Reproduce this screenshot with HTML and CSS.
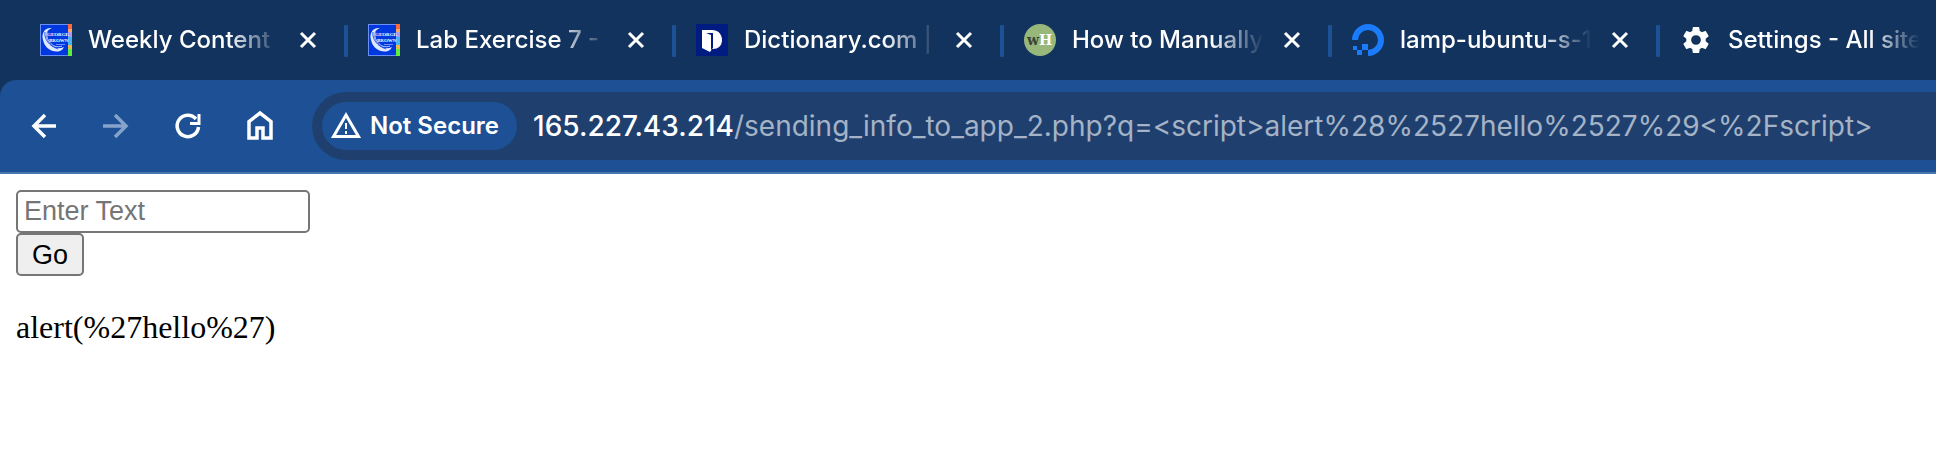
FILE: index.html
```html
<!DOCTYPE html>
<html lang="en">
<head>
<meta charset="utf-8">
<title>165.227.43.214/sending_info_to_app_2.php</title>
<link rel="stylesheet" href="styles.css">
</head>
<body>
<svg class="defs" aria-hidden="true">
  <symbol id="close" viewBox="0 0 32 32"><path d="M9 9 23 23M23 9 9 23" fill="none" stroke="#fff" stroke-width="3"/></symbol>
  <symbol id="college" viewBox="0 0 32 32">
    <rect width="32" height="32" fill="#6a8ff5"/><rect x="1" y="1" width="27" height="30" fill="#0038e0"/>
    <rect x="28" width="4" height="5" fill="#ff6a3c"/><rect x="28" y="5" width="4" height="3" fill="#ffa568"/><rect x="28" y="8" width="4" height="5" fill="#a99af0"/><rect x="28" y="13" width="4" height="8" fill="#42b4f5"/><rect x="28" y="21" width="4" height="4" fill="#f0b840"/><rect x="28" y="25" width="4" height="7" fill="#62ee3c"/>
    <path d="M12 4C5 3 1 9 3 16c2 9 10 13 17 11 2-1 3-2 4-4-7 3-13 0-16-6C5 12 6 6 12 4Z" fill="#dfe8ff"/>
    <path d="M5 8c-1 7 4 14 13 17" fill="none" stroke="#0038e0" stroke-width=".8"/>
    <path d="M7 8c-1 6 2 11 7 14 3 1 6 1 8 0" fill="none" stroke="#b9caff" stroke-width="1"/>
    <path d="M16 20.500h9" stroke="#6f8cfa"/>
  </symbol>
</svg>
<header>
  <nav class="tabs" aria-label="Open tabs">
    <div class="tab"><svg class="favicon" viewBox="0 0 32 32"><use href="#college"/><text x="7" y="12" class="college-name">GEORGE</text><text x="9" y="18" class="college-name">BROWN</text></svg><a class="title" href="#">Weekly Content</a><button class="close" aria-label="Close Weekly Content"><svg><use href="#close"/></svg></button></div>
    <div class="tab"><svg class="favicon" viewBox="0 0 32 32"><use href="#college"/><text x="7" y="12" class="college-name">GEORGE</text><text x="9" y="18" class="college-name">BROWN</text></svg><a class="title" href="#">Lab Exercise 7 -</a><button class="close" aria-label="Close Lab Exercise 7"><svg><use href="#close"/></svg></button></div>
    <div class="tab"><svg class="favicon" viewBox="0 0 32 32"><rect width="32" height="32" fill="#001c80"/><path d="M6 6h10c6 0 10 4 10 10s-4 9-9 9h-1l-2 3-8-4Z" fill="#fff"/><path d="M10 9h7v15l-2 2V11Z" fill="#001c80"/><path d="M10 9l3 2h1v16l-2-1V11Z" fill="#fff"/></svg><a class="title" href="#">Dictionary.com |</a><button class="close" aria-label="Close Dictionary.com"><svg><use href="#close"/></svg></button></div>
    <div class="tab"><svg class="favicon" viewBox="0 0 32 32"><circle cx="16" cy="16" r="16" fill="#97b77b"/><text x="3" y="21" class="wiki-w">w</text><text x="15" y="21" class="wiki-h">H</text></svg><a class="title" href="#">How to Manually</a><button class="close" aria-label="Close How to Manually"><svg><use href="#close"/></svg></button></div>
    <div class="tab"><svg class="favicon" viewBox="0 0 32 32"><path d="M3 16A13 13 0 1 1 16 29" fill="none" stroke="#1a7cfa" stroke-width="6"/><path d="M10 20h6v6h-6v5H5v-5H1v-4h4v4h5Z" fill="#1a7cfa"/></svg><a class="title" href="#">lamp-ubuntu-s-1</a><button class="close" aria-label="Close lamp-ubuntu"><svg><use href="#close"/></svg></button></div>
    <div class="tab"><svg class="favicon" viewBox="0 0 32 32"><path transform="translate(-.2 -.2) scale(1.35)" fill="#fff" d="M19.14 12.94c.04-.3.06-.61.06-.94 0-.32-.02-.64-.07-.94l2.03-1.58a.49.49 0 0 0 .12-.61l-1.92-3.32a.488.488 0 0 0-.59-.22l-2.39.96c-.5-.38-1.03-.7-1.62-.94l-.36-2.54a.484.484 0 0 0-.48-.41h-3.84c-.24 0-.43.17-.47.41l-.36 2.54c-.59.24-1.13.57-1.62.94l-2.39-.96c-.22-.08-.47 0-.59.22L2.74 8.87c-.12.21-.08.47.12.61l2.03 1.58c-.05.3-.09.63-.09.94s.02.64.07.94l-2.03 1.58a.49.49 0 0 0-.12.61l1.92 3.32c.12.22.37.29.59.22l2.39-.96c.5.38 1.03.7 1.62.94l.36 2.54c.05.24.24.41.48.41h3.84c.24 0 .44-.17.47-.41l.36-2.54c.59-.24 1.13-.56 1.62-.94l2.39.96c.22.08.47 0 .59-.22l1.92-3.32c.12-.22.07-.47-.12-.61l-2.01-1.58zM12 15.6A3.6 3.6 0 1 1 12 8.4a3.6 3.6 0 0 1 0 7.200z"/></svg><a class="title" href="#">Settings - All site</a><button class="close" aria-label="Close Settings"><svg><use href="#close"/></svg></button></div>
  </nav>
  <div class="toolbar">
    <div class="controls">
      <button aria-label="Back"><svg viewBox="0 0 32 32"><path d="M28 16H6M17 5 6 16 17 27" fill="none" stroke="#fff" stroke-width="3.5"/></svg></button>
      <button aria-label="Forward" disabled><svg viewBox="0 0 32 32"><path d="M3 16h22M15 5 26 16 15 27" fill="none" stroke="#86a3cb" stroke-width="3.5"/></svg></button>
      <button aria-label="Reload"><svg viewBox="0 0 32 32"><path d="M26.500 17A10.700 10.700 0 1 1 24 9" fill="none" stroke="#fff" stroke-width="3.500"/><path d="M25.500 4h3v11H18v-3h7.500Z" fill="#fff"/></svg></button>
      <button aria-label="Home"><svg viewBox="0 0 32 32"><path d="M5 28V11.500L16 3l11 8.500V28h-8V18h-6v10Z" fill="none" stroke="#fff" stroke-width="3.500"/></svg></button>
    </div>
    <div class="omnibox">
      <button class="security"><svg viewBox="0 0 32 32"><path d="M3.500 26.500 16 5 28.500 26.500Z" fill="none" stroke="#fff" stroke-width="3"/><path d="M16 13v6M16 21v3" stroke="#fff" stroke-width="2"/></svg>Not Secure</button>
      <div class="url" role="textbox" aria-label="Address" contenteditable="true" spellcheck="false"><span class="host">165.227.43.214</span>/sending_info_to_app_2.php?q=&lt;script&gt;alert%28%2527hello%2527%29&lt;%2Fscript&gt;</div>
    </div>
  </div>
</header>
<main>
  <form>
    <input type="text" name="q" placeholder="Enter Text" aria-label="Enter Text">
    <button type="button">Go</button>
  </form>
  <p>alert(%27hello%27)</p>
</main>
</body>
</html>
```

FILE: styles.css
```css
* { box-sizing: border-box; }
body { margin: 0; background: #fff; font-family: "Liberation Serif", "Times New Roman", serif; }
button { margin: 0; padding: 0; border: 0; background: none; color: inherit; }
.defs { position: absolute; width: 0; height: 0; }
header { background: #12335e; color: #fff; font-family: Inter, sans-serif; }

.tabs { display: flex; height: 80px; padding-left: 20px; overflow: hidden; }
.tab { display: flex; flex: 0 0 328px; align-items: center; min-width: 0; padding-left: 20px; }
.tab::after { content: ""; flex: none; width: 4px; height: 32px; margin: 2px 0 0 20px; border-radius: 1px; background: #1d5196; }
.favicon { flex: none; width: 32px; height: 32px; margin-right: 16px; }
.title {
  flex: 1;
  min-width: 0;
  margin-right: 8px;
  overflow: hidden;
  color: #fff;
  font-size: 24px;
  font-weight: 500;
  line-height: 32px;
  white-space: nowrap;
  text-decoration: none;
  -webkit-mask-image: linear-gradient(to right, #000 140px, transparent 192px);
  mask-image: linear-gradient(to right, #000 140px, transparent 192px);
}
.close, .close svg { display: block; flex: none; width: 32px; height: 32px; }
.college-name { fill: #fff; font: bold 5px "Liberation Serif", serif; }
.wiki-w { fill: #3c4534; font: bold 14px "DejaVu Serif", serif; }
.wiki-h { fill: #fff; font: bold 14px "DejaVu Serif", serif; }

.toolbar {
  display: flex;
  align-items: center;
  gap: 36px;
  padding: 12px 0;
  border-bottom: 2px solid #4677b2;
  border-top-left-radius: 16px;
  background: #1d5094;
}
.controls { display: flex; gap: 40px; padding-left: 28px; }
.controls button, .controls svg { display: block; width: 32px; height: 32px; }
.omnibox {
  display: flex;
  flex: 1;
  align-items: center;
  gap: 16px;
  min-width: 0;
  padding: 10px;
  overflow: hidden;
  border-radius: 34px 0 0 34px;
  background: #1f406f;
}
.security {
  display: flex;
  flex: none;
  align-items: center;
  gap: 8px;
  height: 48px;
  padding: 0 18px 0 8px;
  border-radius: 24px;
  background: #1d5094;
  font: 600 24px/32px Inter, sans-serif;
}
.security svg { width: 32px; height: 32px; }
.url { color: #a5b3c6; font-size: 28px; line-height: 36px; white-space: nowrap; }
.host { color: #fff; font-weight: 500; }

main { padding: 16px; }
form { display: flex; flex-direction: column; align-items: flex-start; }
form input, form button {
  height: 43px;
  border: 2px solid #767676;
  border-radius: 5px;
  font: 27px/32px "Liberation Sans", Arial, sans-serif;
}
form input { width: 294px; padding: 0 6px; background: #fff; color: #000; }
form input::placeholder { color: #757575; opacity: 1; }
form button { padding: 0 14px; background: #efefef; color: #000; }
main p { margin: 32px 0; font-size: 32px; line-height: 38px; }
```
